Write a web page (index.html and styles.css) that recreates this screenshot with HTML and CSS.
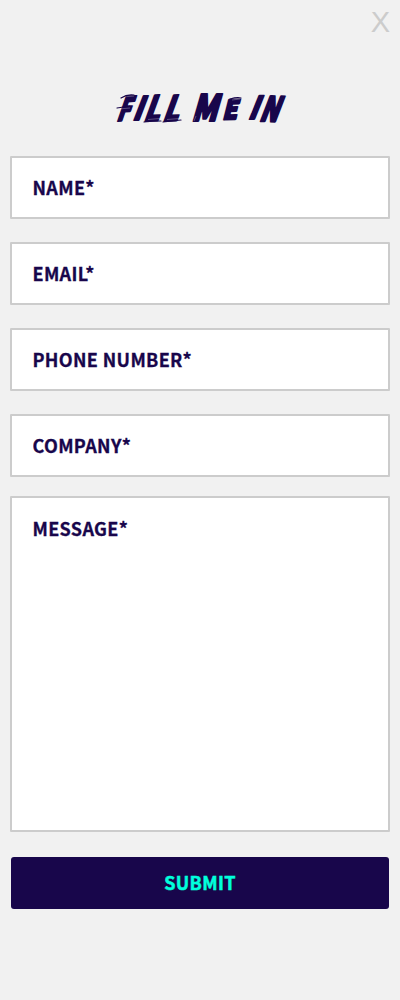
FILE: index.html
```html
<!DOCTYPE html>
<html lang="en">
<head>
<meta charset="utf-8">
<meta name="viewport" content="width=device-width, initial-scale=1">
<title>Fill me in</title>
<link rel="stylesheet" href="styles.css">
</head>
<body>
<main class="panel">
  <header class="panel-top"><button class="close" type="button" aria-label="Close">X</button></header>
  <h1 class="title">
    <svg class="title-art" viewBox="0 0 180 44" width="180" height="44">
      <g class="letters">
        <text transform="translate(6 35) rotate(-3) skewX(-22)" font-size="32" textLength="13" lengthAdjust="spacingAndGlyphs">F</text>
        <text transform="translate(22 34) skewX(-21)" font-size="32" textLength="9" lengthAdjust="spacingAndGlyphs">I</text>
        <text transform="translate(33 35) rotate(-2) skewX(-22)" font-size="34" textLength="16" lengthAdjust="spacingAndGlyphs">L</text>
        <text transform="translate(52 35) rotate(-2) skewX(-22)" font-size="34" textLength="16" lengthAdjust="spacingAndGlyphs">L</text>
        <text transform="translate(81 35) skewX(-16)" font-size="36" textLength="26" lengthAdjust="spacingAndGlyphs">M</text>
        <text transform="translate(112 33.5) rotate(-2) skewX(-16)" font-size="26" textLength="15" lengthAdjust="spacingAndGlyphs">E</text>
        <text transform="translate(137.500 32.500) skewX(-22)" font-size="31" textLength="9" lengthAdjust="spacingAndGlyphs">I</text>
        <text transform="translate(148.500 35) rotate(2) skewX(-19)" font-size="34" textLength="19" lengthAdjust="spacingAndGlyphs">N</text>
      </g>
      <path class="dry" d="M12 11l12-1M9 23l11-1M38 33.500l12-1M57 33.500l13-1M130 13l-8 1M86 30l-2 5M144 18l-3 9"/>
      <path class="bristle" d="M11 12q6-4 13-3M7 22l13-2M34 36q9-1 17-1M53 36q9-1 18-2M120 13q7-2 11-1"/>
    </svg>
  </h1>
  <form class="form">
    <input class="field" type="text" placeholder="NAME*">
    <input class="field" type="text" placeholder="EMAIL*">
    <input class="field" type="text" placeholder="PHONE NUMBER*">
    <input class="field" type="text" placeholder="COMPANY*">
    <textarea class="field message" placeholder="MESSAGE*"></textarea>
    <button class="submit" type="button">SUBMIT</button>
  </form>
</main>
</body>
</html>
```
FILE: styles.css
```css
* { box-sizing: border-box; }
body {
  margin: 0;
  background: #f1f1f1;
  color: #18064b;
  font-family: "Noto Sans CJK SC", "Noto Sans", sans-serif;
}
.panel { min-height: 1000px; padding: 0 10px; }
.panel-top { display: flex; justify-content: flex-end; height: 86px; }
.close {
  height: 45px;
  padding: 0;
  border: 0;
  background: none;
  color: #ccc;
  font: 29px/45px "Liberation Sans", Arial, sans-serif;
}
.title { display: flex; justify-content: center; height: 70px; margin: 0; }
.title-art { overflow: visible; }
.letters {
  fill: #18064b;
  stroke: #18064b;
  stroke-width: 2.2;
  stroke-linejoin: round;
  font-family: "Noto Sans CJK SC", sans-serif;
  font-weight: 900;
}
.dry { fill: none; stroke: #f1f1f1; stroke-width: .5; opacity: .6; }
.bristle { fill: none; stroke: #18064b; stroke-width: 1.2; stroke-linecap: round; }
.form { display: flex; flex-direction: column; }
.field {
  width: 100%;
  height: 63px;
  margin: 0 0 23px;
  padding: 0 21px 1px 20.5px;
  border: 2px solid #ccc;
  border-radius: 1px;
  background: #fff;
  color: #18064b;
  font: 700 18px/28px "Noto Sans CJK SC", "Noto Sans", sans-serif;
  letter-spacing: .35px;
  -webkit-text-stroke: .3px currentColor;
  outline: 0;
}
.field::placeholder { color: #18064b; opacity: 1; }
.message {
  display: block;
  height: 336px;
  margin: -4px 0 25px;
  padding-top: 16px;
  resize: none;
}
.submit {
  height: 52px;
  margin: 0 1px;
  padding: 0 0 1px;
  border: 0;
  border-radius: 3px;
  background: #18064b;
  color: #00ffdc;
  font: 700 18px/51px "Noto Sans CJK SC", "Noto Sans", sans-serif;
  letter-spacing: .35px;
  -webkit-text-stroke: .5px currentColor;
}
```
